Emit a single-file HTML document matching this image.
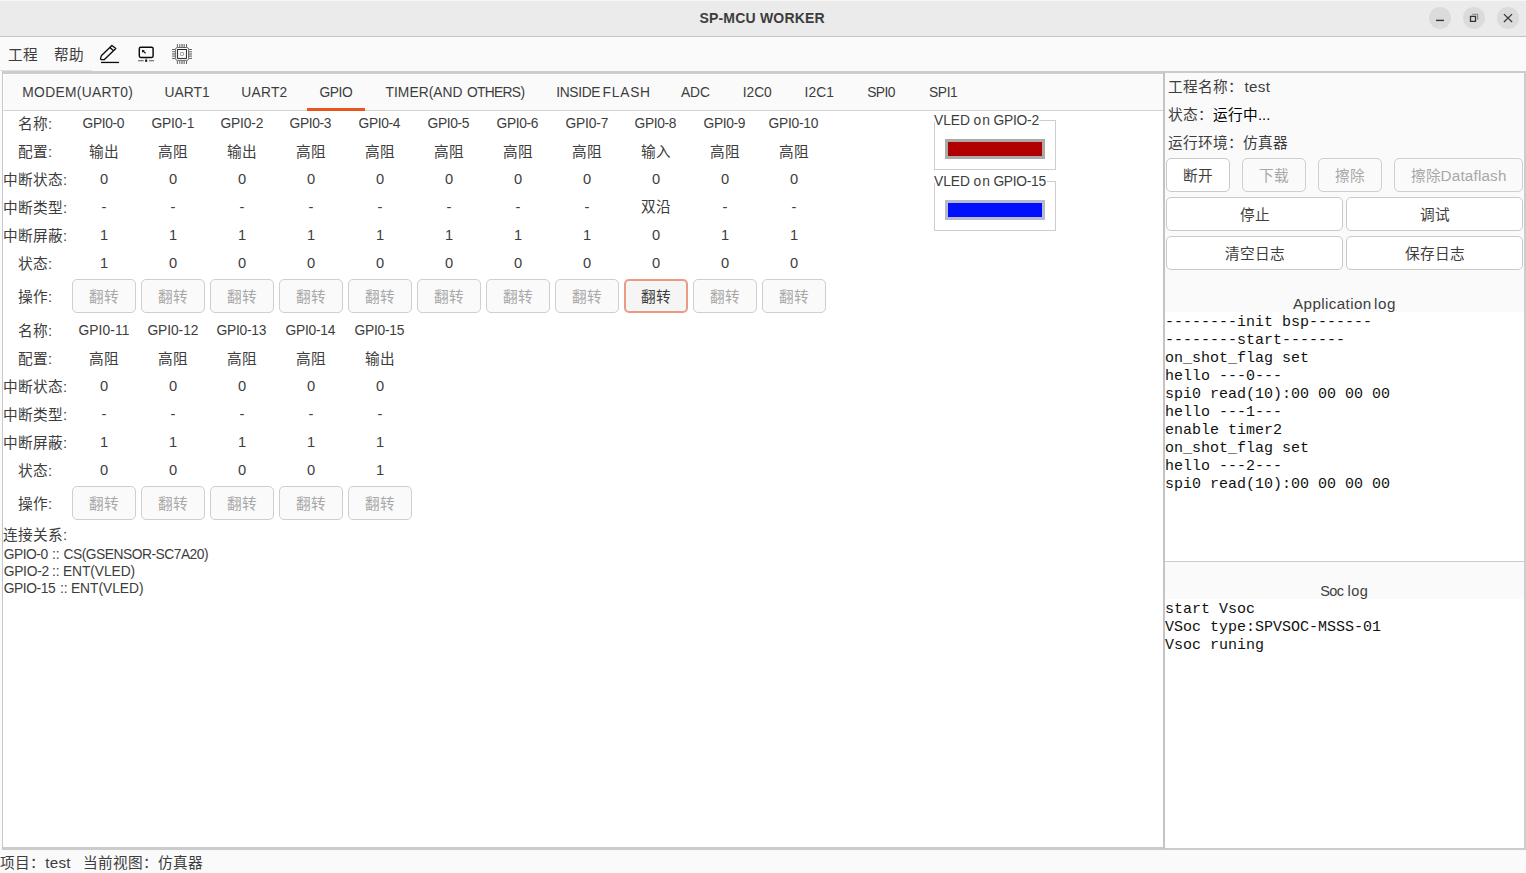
<!DOCTYPE html>
<html lang="zh-CN"><head><meta charset="utf-8"><title>SP-MCU WORKER</title>
<style>
html,body{margin:0;padding:0;}
body{width:1526px;height:873px;overflow:hidden;background:#fafafa;position:relative;
 font-family:"Liberation Sans",sans-serif;font-size:14.67px;color:#3d3d3d;}
div{box-sizing:border-box;}
.abs,.c,.lab,.btn,.t{position:absolute;white-space:nowrap;}
#titlebar{left:0;top:0;width:1526px;height:37px;background:#ebebeb;border-bottom:1px solid #c4c4c4;}
#title{left:699.4px;top:0;height:36px;line-height:36px;font-weight:bold;font-size:14px;letter-spacing:0.2px;color:#3d3d3d;}
.wbtn{position:absolute;top:7px;width:22px;height:22px;border-radius:11px;background:#dbdbdb;}
.wbtn svg{position:absolute;left:0;top:0;}
.menu{top:45px;height:20px;line-height:20px;}
#left{left:2px;top:71px;width:1162px;height:779px;background:#fff;border-left:1px solid #c8c8c8;border-top:3px solid #cdcdcd;border-bottom:3px solid #cbcbcb;}
#tabbar{left:3px;top:74px;width:1160px;height:37px;background:#fafafa;border-bottom:1px solid #d2d2d2;border-top:1px solid #fff;border-left:1px solid #fff;}
#tabline{left:307px;top:108px;width:58px;height:3px;background:#e95420;}
.c{width:80px;height:20px;line-height:20px;text-align:center;}
.lab{left:0px;width:70px;height:20px;line-height:20px;text-align:center;}
.btn{height:34px;line-height:34px;text-align:center;border-radius:5px;}
.btn.dis{border:1px solid #cfcfcf;background:#fafafa;color:#a8a8a8;}
.btn.on{border:2px solid #eb9a83;background:#f5f5f5;color:#3d3d3d;line-height:32px;}
.btn.nm{border:1px solid #c9c9c9;background:#fff;color:#3d3d3d;}
.t{height:20px;line-height:20px;}
.frame{position:absolute;border:1px solid #cdcdcd;}
.fcut{position:absolute;background:#fff;height:3px;}
.led{position:absolute;width:100px;height:20px;}
#right{left:1163px;top:71px;width:363px;height:779px;background:#fafafa;border:2px solid #cccccc;border-left:2px solid #c4c4c4;}
.logbox{position:absolute;background:#fff;}
pre{margin:0;position:absolute;font-family:"Liberation Mono",monospace;font-size:15px;line-height:18px;color:#111;}
</style></head><body>
<div class="abs" id="titlebar"></div>
<div class="abs" style="left:0;top:0;width:1526px;height:1px;background:#f6f6f6"></div>
<div class="abs" style="left:0;top:70px;width:92px;height:1px;background:#e0e0e0"></div>
<div class="abs" id="title">SP-MCU WORKER</div>
<div class="wbtn" style="left:1429px"><svg width="22" height="22" viewBox="0 0 22 22"><path d="M7 13.4h8" stroke="#333" stroke-width="1.4" fill="none"/></svg></div>
<div class="wbtn" style="left:1463px"><svg width="22" height="22" viewBox="0 0 22 22"><path d="M7.5 9.4h5v5h-5z" stroke="#333" stroke-width="1.3" fill="none"/><path d="M9.2 7.3H14.7V12.7" stroke="#777" stroke-width="0.9" fill="none"/></svg></div>
<div class="wbtn" style="left:1497px"><svg width="22" height="22" viewBox="0 0 22 22"><path d="M6.9 7.1l8.2 7.9M15.1 7.1l-8.2 7.9" stroke="#333" stroke-width="1.2" fill="none"/></svg></div>

<div class="abs menu" style="left:8px">工程</div>
<div class="abs menu" style="left:54px">帮助</div>
<svg class="abs" style="left:96px;top:40px" width="30" height="28" viewBox="0 0 30 28"><path d="M5.5 15.4L15.9 5.4L19.8 8.6L8.4 19.5L5.4 19.6Q4.4 19.5 4.6 18.4Z M13.8 7.6L17.3 10.6" stroke="#0a0a0a" stroke-width="1.35" fill="none" stroke-linejoin="round"/><path d="M5 22.45H23.1" stroke="#0a0a0a" stroke-width="1.3"/></svg>
<svg class="abs" style="left:132px;top:40px" width="30" height="28" viewBox="0 0 30 28"><rect x="7.3" y="7.3" width="13.8" height="10.1" rx="1.4" stroke="#0a0a0a" stroke-width="1.45" fill="none"/><path d="M10.6 10.6L13.6 13.3" stroke="#111" stroke-width="1.2"/><path d="M9.8 9.8L12.8 10.4L10.4 12.8Z" fill="#111"/><path d="M6.1 20.7h5.6M17 20.7h5.1" stroke="#555" stroke-width="1.1"/><rect x="13.1" y="19.7" width="2.1" height="2.1" fill="#111"/><path d="M14.15 18v2" stroke="#555" stroke-width="0.8"/></svg>
<svg class="abs" style="left:167px;top:40px" width="30" height="28" viewBox="0 0 30 28"><path d="M10.4 4v3M19.5 4v3M10.4 21v3M19.5 21v3M5.1 9.5h3M5.1 18.45h3M22 9.5h3M22 18.45h3" stroke="#4a4a4a" stroke-width="0.85" fill="none"/><path d="M12.5 4v3M17.5 4v3M12.5 21v3M17.5 21v3M5.1 11.5h3M5.1 16.6h3M22 11.5h3M22 16.6h3" stroke="#777" stroke-width="0.8" fill="none"/><path d="M13.5 4h3.2v3h-3.2zM13.5 21h3.2v3h-3.2zM5.1 12.5h3v3.2h-3zM22 12.5h3v3.2h-3z" fill="#a4a4a4"/><rect x="8.6" y="7.5" width="13" height="12.9" rx="1.8" stroke="#606060" stroke-width="0.95" fill="#fcfcfc"/><rect x="10.6" y="9.5" width="8.8" height="8.9" stroke="#1c1c1c" stroke-width="0.95" fill="#fff"/><rect x="13.5" y="12.5" width="3" height="2.9" rx="0.7" stroke="#808080" stroke-width="0.85" fill="none"/></svg>

<div class="abs" id="left"></div>
<div class="abs" id="tabbar"></div>
<div class="abs" id="tabline"></div>

<div class="frame" style="left:934px;top:120px;width:122px;height:50px"></div>
<div class="fcut" style="left:934px;top:119px;width:105px"></div>
<div class="led" style="left:945px;top:139px;background:#b00000;border:3px solid #ababab"></div>
<div class="frame" style="left:934px;top:181px;width:122px;height:50px"></div>
<div class="fcut" style="left:934px;top:180px;width:113px"></div>
<div class="led" style="left:945px;top:200px;background:#0010ff;border:3px solid #b9b9cf"></div>

<div class="lab" style="top:114px">名称:</div>
<div class="lab" style="top:142px">配置:</div>
<div class="c" style="left:64px;top:142px">输出</div>
<div class="c" style="left:133px;top:142px">高阻</div>
<div class="c" style="left:202px;top:142px">输出</div>
<div class="c" style="left:271px;top:142px">高阻</div>
<div class="c" style="left:340px;top:142px">高阻</div>
<div class="c" style="left:409px;top:142px">高阻</div>
<div class="c" style="left:478px;top:142px">高阻</div>
<div class="c" style="left:547px;top:142px">高阻</div>
<div class="c" style="left:616px;top:142px">输入</div>
<div class="c" style="left:685px;top:142px">高阻</div>
<div class="c" style="left:754px;top:142px">高阻</div>
<div class="lab" style="top:170px">中断状态:</div>
<div class="c" style="left:64px;top:169px">0</div>
<div class="c" style="left:133px;top:169px">0</div>
<div class="c" style="left:202px;top:169px">0</div>
<div class="c" style="left:271px;top:169px">0</div>
<div class="c" style="left:340px;top:169px">0</div>
<div class="c" style="left:409px;top:169px">0</div>
<div class="c" style="left:478px;top:169px">0</div>
<div class="c" style="left:547px;top:169px">0</div>
<div class="c" style="left:616px;top:169px">0</div>
<div class="c" style="left:685px;top:169px">0</div>
<div class="c" style="left:754px;top:169px">0</div>
<div class="lab" style="top:198px">中断类型:</div>
<div class="c" style="left:64px;top:197px">-</div>
<div class="c" style="left:133px;top:197px">-</div>
<div class="c" style="left:202px;top:197px">-</div>
<div class="c" style="left:271px;top:197px">-</div>
<div class="c" style="left:340px;top:197px">-</div>
<div class="c" style="left:409px;top:197px">-</div>
<div class="c" style="left:478px;top:197px">-</div>
<div class="c" style="left:547px;top:197px">-</div>
<div class="c" style="left:616px;top:197px">双沿</div>
<div class="c" style="left:685px;top:197px">-</div>
<div class="c" style="left:754px;top:197px">-</div>
<div class="lab" style="top:226px">中断屏蔽:</div>
<div class="c" style="left:64px;top:225px">1</div>
<div class="c" style="left:133px;top:225px">1</div>
<div class="c" style="left:202px;top:225px">1</div>
<div class="c" style="left:271px;top:225px">1</div>
<div class="c" style="left:340px;top:225px">1</div>
<div class="c" style="left:409px;top:225px">1</div>
<div class="c" style="left:478px;top:225px">1</div>
<div class="c" style="left:547px;top:225px">1</div>
<div class="c" style="left:616px;top:225px">0</div>
<div class="c" style="left:685px;top:225px">1</div>
<div class="c" style="left:754px;top:225px">1</div>
<div class="lab" style="top:254px">状态:</div>
<div class="c" style="left:64px;top:253px">1</div>
<div class="c" style="left:133px;top:253px">0</div>
<div class="c" style="left:202px;top:253px">0</div>
<div class="c" style="left:271px;top:253px">0</div>
<div class="c" style="left:340px;top:253px">0</div>
<div class="c" style="left:409px;top:253px">0</div>
<div class="c" style="left:478px;top:253px">0</div>
<div class="c" style="left:547px;top:253px">0</div>
<div class="c" style="left:616px;top:253px">0</div>
<div class="c" style="left:685px;top:253px">0</div>
<div class="c" style="left:754px;top:253px">0</div>
<div class="lab" style="top:287px">操作:</div>
<div class="btn dis" style="left:72px;top:279px;width:64px">翻转</div>
<div class="btn dis" style="left:141px;top:279px;width:64px">翻转</div>
<div class="btn dis" style="left:210px;top:279px;width:64px">翻转</div>
<div class="btn dis" style="left:279px;top:279px;width:64px">翻转</div>
<div class="btn dis" style="left:348px;top:279px;width:64px">翻转</div>
<div class="btn dis" style="left:417px;top:279px;width:64px">翻转</div>
<div class="btn dis" style="left:486px;top:279px;width:64px">翻转</div>
<div class="btn dis" style="left:555px;top:279px;width:64px">翻转</div>
<div class="btn on" style="left:624px;top:279px;width:64px">翻转</div>
<div class="btn dis" style="left:693px;top:279px;width:64px">翻转</div>
<div class="btn dis" style="left:762px;top:279px;width:64px">翻转</div>
<div class="lab" style="top:321px">名称:</div>
<div class="lab" style="top:349px">配置:</div>
<div class="c" style="left:64px;top:349px">高阻</div>
<div class="c" style="left:133px;top:349px">高阻</div>
<div class="c" style="left:202px;top:349px">高阻</div>
<div class="c" style="left:271px;top:349px">高阻</div>
<div class="c" style="left:340px;top:349px">输出</div>
<div class="lab" style="top:377px">中断状态:</div>
<div class="c" style="left:64px;top:376px">0</div>
<div class="c" style="left:133px;top:376px">0</div>
<div class="c" style="left:202px;top:376px">0</div>
<div class="c" style="left:271px;top:376px">0</div>
<div class="c" style="left:340px;top:376px">0</div>
<div class="lab" style="top:405px">中断类型:</div>
<div class="c" style="left:64px;top:404px">-</div>
<div class="c" style="left:133px;top:404px">-</div>
<div class="c" style="left:202px;top:404px">-</div>
<div class="c" style="left:271px;top:404px">-</div>
<div class="c" style="left:340px;top:404px">-</div>
<div class="lab" style="top:433px">中断屏蔽:</div>
<div class="c" style="left:64px;top:432px">1</div>
<div class="c" style="left:133px;top:432px">1</div>
<div class="c" style="left:202px;top:432px">1</div>
<div class="c" style="left:271px;top:432px">1</div>
<div class="c" style="left:340px;top:432px">1</div>
<div class="lab" style="top:461px">状态:</div>
<div class="c" style="left:64px;top:460px">0</div>
<div class="c" style="left:133px;top:460px">0</div>
<div class="c" style="left:202px;top:460px">0</div>
<div class="c" style="left:271px;top:460px">0</div>
<div class="c" style="left:340px;top:460px">1</div>
<div class="lab" style="top:494px">操作:</div>
<div class="btn dis" style="left:72px;top:486px;width:64px">翻转</div>
<div class="btn dis" style="left:141px;top:486px;width:64px">翻转</div>
<div class="btn dis" style="left:210px;top:486px;width:64px">翻转</div>
<div class="btn dis" style="left:279px;top:486px;width:64px">翻转</div>
<div class="btn dis" style="left:348px;top:486px;width:64px">翻转</div>

<div class="t" style="left:3px;top:525px">连接关系:</div>

<div class="abs" id="right"></div>
<div class="t" style="left:1168px;top:77px">工程名称：</div>
<div class="t" style="left:1168px;top:105px">状态：<span style="color:#000">运行中...</span></div>
<div class="t" style="left:1168px;top:133px">运行环境：仿真器</div>
<div class="btn nm" style="left:1166px;top:158px;width:64px">断开</div>
<div class="btn dis" style="left:1242px;top:158px;width:64px">下载</div>
<div class="btn dis" style="left:1318px;top:158px;width:64px">擦除</div>
<div class="btn dis" style="left:1394px;top:158px;width:129px"></div>
<div class="t" style="left:1411px;top:166px;color:#a8a8a8">擦除</div>
<div class="btn nm" style="left:1166px;top:197px;width:177px">停止</div>
<div class="btn nm" style="left:1346px;top:197px;width:177px">调试</div>
<div class="btn nm" style="left:1166px;top:236px;width:177px">清空日志</div>
<div class="btn nm" style="left:1346px;top:236px;width:177px">保存日志</div>

<div class="logbox" style="left:1165px;top:312px;width:359px;height:249px"></div>
<pre style="left:1165px;top:314px">--------init bsp-------
--------start-------
on_shot_flag set
hello ---0---
spi0 read(10):00 00 00 00
hello ---1---
enable timer2
on_shot_flag set
hello ---2---
spi0 read(10):00 00 00 00</pre>
<div class="abs" style="left:1165px;top:561px;width:359px;height:1px;background:#cdcdcd"></div>
<div class="logbox" style="left:1165px;top:599px;width:359px;height:249px"></div>
<pre style="left:1165px;top:601px">start Vsoc
VSoc type:SPVSOC-MSSS-01
Vsoc runing</pre>

<div class="t" style="left:0px;top:853px">项目：</div>
<div class="t" style="left:83px;top:853px">当前视图：仿真器</div>

<div class="t" style="left:22.30px;top:83.0px;font-size:13.8px;letter-spacing:0.313px;">MODEM(UART0)</div>
<div class="t" style="left:164.50px;top:83.0px;font-size:13.8px;letter-spacing:0.048px;">UART1</div>
<div class="t" style="left:241.30px;top:83.0px;font-size:13.8px;letter-spacing:0.248px;">UART2</div>
<div class="t" style="left:319.60px;top:83.0px;font-size:13.8px;letter-spacing:-0.456px;">GPIO</div>
<div class="t" style="left:385.50px;top:83.0px;font-size:13.8px;letter-spacing:0.052px;">TIMER(AND</div>
<div class="t" style="left:466.90px;top:83.0px;font-size:13.8px;letter-spacing:-0.665px;">OTHERS)</div>
<div class="t" style="left:556.20px;top:83.0px;font-size:13.8px;letter-spacing:-0.339px;">INSIDE</div>
<div class="t" style="left:602.50px;top:83.0px;font-size:13.8px;letter-spacing:0.774px;">FLASH</div>
<div class="t" style="left:681.10px;top:83.0px;font-size:13.8px;letter-spacing:-0.183px;">ADC</div>
<div class="t" style="left:742.80px;top:83.0px;font-size:13.8px;letter-spacing:-0.057px;">I2C0</div>
<div class="t" style="left:804.60px;top:83.0px;font-size:13.8px;letter-spacing:0.043px;">I2C1</div>
<div class="t" style="left:867.20px;top:83.0px;font-size:13.8px;letter-spacing:-0.579px;">SPI0</div>
<div class="t" style="left:929.00px;top:83.0px;font-size:13.8px;letter-spacing:-0.379px;">SPI1</div>
<div class="t" style="left:3.70px;top:544.5px;font-size:13.8px;letter-spacing:-0.459px;">GPIO-0</div>
<div class="t" style="left:52.10px;top:544.5px;font-size:13.8px;letter-spacing:-0.133px;">::</div>
<div class="t" style="left:63.50px;top:544.5px;font-size:13.8px;letter-spacing:-0.485px;">CS(GSENSOR-SC7A20)</div>
<div class="t" style="left:3.70px;top:562.0px;font-size:13.8px;letter-spacing:-0.259px;">GPIO-2</div>
<div class="t" style="left:52.10px;top:562.0px;font-size:13.8px;letter-spacing:-0.133px;">::</div>
<div class="t" style="left:63.00px;top:562.0px;font-size:13.8px;letter-spacing:-0.091px;">ENT(VLED)</div>
<div class="t" style="left:3.70px;top:578.7px;font-size:13.8px;letter-spacing:-0.411px;">GPIO-15</div>
<div class="t" style="left:60.00px;top:578.7px;font-size:13.8px;letter-spacing:-0.033px;">::</div>
<div class="t" style="left:70.90px;top:578.7px;font-size:13.8px;letter-spacing:-0.029px;">ENT(VLED)</div>
<div class="t" style="left:934.10px;top:111.0px;font-size:13.8px;letter-spacing:-0.093px;">VLED</div>
<div class="t" style="left:973.40px;top:111.0px;font-size:13.8px;letter-spacing:1.227px;">on</div>
<div class="t" style="left:993.40px;top:111.0px;font-size:13.8px;letter-spacing:-0.219px;">GPIO-2</div>
<div class="t" style="left:934.10px;top:172.0px;font-size:13.8px;letter-spacing:-0.093px;">VLED</div>
<div class="t" style="left:973.40px;top:172.0px;font-size:13.8px;letter-spacing:1.227px;">on</div>
<div class="t" style="left:993.40px;top:172.0px;font-size:13.8px;letter-spacing:-0.278px;">GPIO-15</div>
<div class="t" style="left:1293.10px;top:294.3px;font-size:15.2px;letter-spacing:0.385px;">Application</div>
<div class="t" style="left:1373.90px;top:294.3px;font-size:15.2px;letter-spacing:0.640px;">log</div>
<div class="t" style="left:1320.20px;top:581.3px;font-size:14.48px;letter-spacing:-0.574px;">Soc</div>
<div class="t" style="left:1347.60px;top:581.3px;font-size:14.48px;letter-spacing:0.469px;">log</div>
<div class="t" style="left:1244.40px;top:77.0px;font-size:15.2px;letter-spacing:0.380px;">test</div>
<div class="t" style="left:1440.60px;top:165.5px;font-size:15.2px;letter-spacing:0.198px;color:#a8a8a8">Dataflash</div>
<div class="t" style="left:45.30px;top:853.3px;font-size:15.2px;letter-spacing:0.247px;">test</div>
<div class="t" style="left:82.55px;top:114.0px;font-size:13.8px;letter-spacing:-0.387px;">GPI0-0</div>
<div class="t" style="left:151.55px;top:114.0px;font-size:13.8px;letter-spacing:-0.187px;">GPI0-1</div>
<div class="t" style="left:220.55px;top:114.0px;font-size:13.8px;letter-spacing:-0.187px;">GPI0-2</div>
<div class="t" style="left:289.55px;top:114.0px;font-size:13.8px;letter-spacing:-0.387px;">GPI0-3</div>
<div class="t" style="left:358.55px;top:114.0px;font-size:13.8px;letter-spacing:-0.387px;">GPI0-4</div>
<div class="t" style="left:427.55px;top:114.0px;font-size:13.8px;letter-spacing:-0.387px;">GPI0-5</div>
<div class="t" style="left:496.55px;top:114.0px;font-size:13.8px;letter-spacing:-0.387px;">GPI0-6</div>
<div class="t" style="left:565.55px;top:114.0px;font-size:13.8px;letter-spacing:-0.187px;">GPI0-7</div>
<div class="t" style="left:634.55px;top:114.0px;font-size:13.8px;letter-spacing:-0.387px;">GPI0-8</div>
<div class="t" style="left:703.55px;top:114.0px;font-size:13.8px;letter-spacing:-0.387px;">GPI0-9</div>
<div class="t" style="left:768.45px;top:114.0px;font-size:13.8px;letter-spacing:-0.235px;">GPI0-10</div>
<div class="t" style="left:78.45px;top:321.0px;font-size:13.8px;letter-spacing:0.103px;">GPI0-11</div>
<div class="t" style="left:147.45px;top:321.0px;font-size:13.8px;letter-spacing:-0.068px;">GPI0-12</div>
<div class="t" style="left:216.45px;top:321.0px;font-size:13.8px;letter-spacing:-0.235px;">GPI0-13</div>
<div class="t" style="left:285.45px;top:321.0px;font-size:13.8px;letter-spacing:-0.235px;">GPI0-14</div>
<div class="t" style="left:354.45px;top:321.0px;font-size:13.8px;letter-spacing:-0.235px;">GPI0-15</div>
</body></html>
